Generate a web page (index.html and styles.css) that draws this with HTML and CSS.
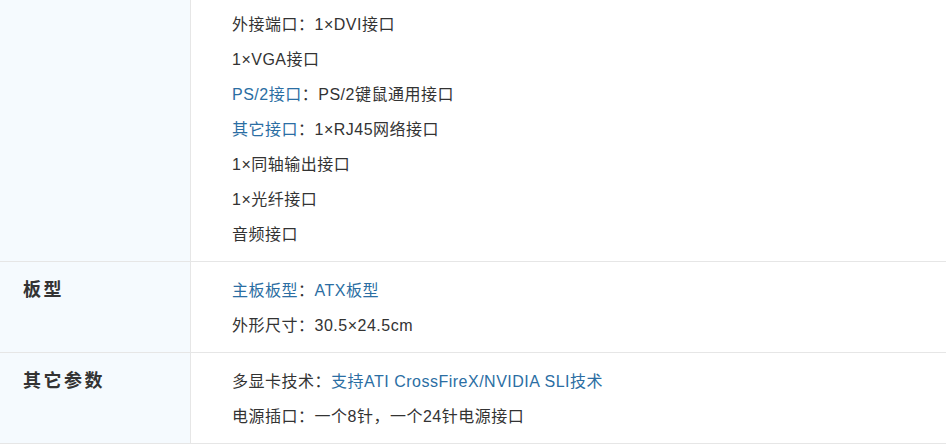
FILE: index.html
```html
<!DOCTYPE html>
<html>

<head>
    <meta charset="UTF-8">
    <meta name="viewport" content="width=device-width, initial-scale=1.0">
    <title>主板参数</title>
    <link rel="stylesheet" href="styles.css">
</head>

<body>
    <div class="param-table">
        <div class="param-row">
            <div class="param-name"></div>
            <ul class="param-list">
                <li>外接端口：1×DVI接口</li>
                <li>1×VGA接口</li>
                <li><a href="#">PS/2接口</a>：PS/2键鼠通用接口</li>
                <li><a href="#">其它接口</a>：1×RJ45网络接口</li>
                <li>1×同轴输出接口</li>
                <li>1×光纤接口</li>
                <li>音频接口</li>
            </ul>
        </div>
        <div class="param-row">
            <div class="param-name">板型</div>
            <ul class="param-list">
                <li><a href="#">主板板型</a>：<a href="#">ATX板型</a></li>
                <li>外形尺寸：30.5×24.5cm</li>
            </ul>
        </div>
        <div class="param-row">
            <div class="param-name">其它参数</div>
            <ul class="param-list">
                <li>多显卡技术：<a href="#">支持ATI CrossFireX/NVIDIA SLI技术</a></li>
                <li>电源插口：一个8针，一个24针电源接口</li>
            </ul>
        </div>
    </div>
</body>

</html>
```

FILE: styles.css
```css
* {
    padding: 0;
    margin: 0;
    font-family: "Liberation Sans", "Noto Sans CJK SC", sans-serif;
}

body {
    background: #fff;
    color: #333;
}

/* 页面是滚动后的一段，表格顶部被截掉一点 */
.param-table {
    margin-top: -4px;
}

.param-row {
    display: flex;
    border-bottom: 1px solid #e6e6e6;
}

.param-name {
    width: 167px;
    flex-shrink: 0;
    padding: 11px 0 9px 23px;
    background: #f5fafe;
    border-right: 1px solid #e6e6e6;
    font-size: 18px;
    font-weight: bold;
    line-height: 35px;
    letter-spacing: 2.5px;
    color: #333;
}

.param-list {
    list-style: none;
    padding: 11px 0 9px 41px;
    font-size: 16px;
    line-height: 35px;
    letter-spacing: 0.5px;
}

.param-list a {
    color: #2b6ea3;
    text-decoration: none;
}
```
